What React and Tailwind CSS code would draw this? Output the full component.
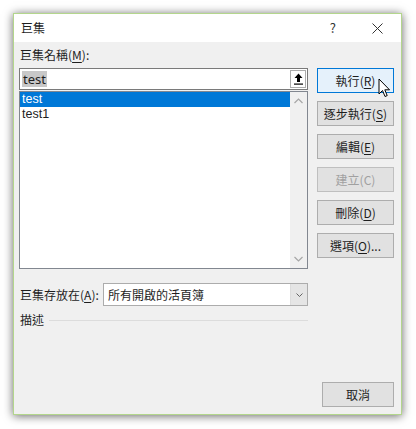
import React from 'react';

const font = { fontFamily: '"Noto Sans CJK TC", "Noto Sans", sans-serif' };
const latin = { fontFamily: '"Noto Sans", "Noto Sans CJK TC", sans-serif' };
const listFont = { fontFamily: '"Liberation Sans", "Noto Sans", sans-serif' };

const Acc = ({ k }) => (
  <>
    (<span className="underline underline-offset-2">{k}</span>)
  </>
);

const Btn = ({ children, active, disabled, className = '' }) => (
  <div
    className={`relative flex h-[25px] items-center justify-center border text-[12px] leading-none ${
      active
        ? 'border-[#0078d7] bg-[#e5f1fb] text-[#1e1e1e]'
        : disabled
        ? 'border-[#bfbfbf] bg-[#e1e1e1] text-[#a0a0a0]'
        : 'border-[#adadad] bg-[#e1e1e1] text-[#1e1e1e]'
    } ${className}`}
  >
    {children}
  </div>
);

const Cursor = () => (
  <svg className="absolute left-[60px] top-[9px]" width="13" height="20" viewBox="0 0 13 20">
    <path d="M1 1 L1 16 L4.5 12.5 L7 18.5 L9.2 17.6 L6.8 11.8 L11.5 11.8 Z" fill="#fff" stroke="#000" strokeWidth="1" strokeLinejoin="round" />
  </svg>
);

const App = () => {
  return (
    <div className="h-[429px] w-[416px] bg-white pl-[13px] pt-[13px]" style={font}>
      <div className="flex h-[402px] w-[389px] flex-col border border-[#b3d68c] shadow-[0_1px_9px_rgba(0,0,0,0.6)]">
        {/* title bar */}
        <div className="flex h-[28px] items-center bg-white pl-[7px] text-[12px] text-[#1e1e1e]">
          <span className="flex-1">巨集</span>
          <span className="mr-[36px] text-[13px] text-[#333]">?</span>
          <svg className="mr-[18px]" width="11" height="11" viewBox="0 0 11 11">
            <path d="M0.5 0.5 L10.5 10.5 M10.5 0.5 L0.5 10.5" stroke="#333" strokeWidth="1" />
          </svg>
        </div>

        {/* body */}
        <div className="flex flex-1 bg-[#f0f0f0] pl-[5px] pr-[7px] text-[12px] text-[#1e1e1e]">
          <div className="flex w-[289px] flex-col">
            <div className="flex h-[26px] items-center pl-[1px]">
              巨集名稱<Acc k="M" />:
            </div>
            <div className="flex h-[22px] border border-[#7a7a7a] bg-white">
              <div className="flex flex-1 items-center pl-[2px]" style={latin}>
                <span className="bg-[#c8c8c8] px-[1px] text-[13px] leading-[16px]">test</span>
              </div>
              <div className="m-[1px] flex w-[16px] items-center justify-center border border-[#adadad] bg-white">
                <svg width="9" height="12" viewBox="0 0 9 12">
                  <path d="M4.5 0.5 L8.5 5 L6 5 L6 9 L3 9 L3 5 L0.5 5 Z" fill="#000" />
                  <rect x="0" y="10.5" width="9" height="1.2" fill="#000" />
                </svg>
              </div>
            </div>
            <div className="mt-[1px] flex h-[178px] border border-[#828790] bg-white">
              <div className="flex flex-1 flex-col text-[12.5px] leading-[15px]" style={listFont}>
                <div className="h-[15px] bg-[#0078d7] pl-[2px] text-white">test</div>
                <div className="h-[14px] pl-[2px] leading-[14px]">test1</div>
              </div>
              <div className="flex w-[17px] flex-col items-center justify-between bg-[#f0f0f0] py-[6px]">
                <svg width="9" height="6" viewBox="0 0 9 6">
                  <path d="M0.5 5 L4.5 1 L8.5 5" fill="none" stroke="#a6a6a6" strokeWidth="1.2" />
                </svg>
                <svg width="9" height="6" viewBox="0 0 9 6">
                  <path d="M0.5 1 L4.5 5 L8.5 1" fill="none" stroke="#a6a6a6" strokeWidth="1.2" />
                </svg>
              </div>
            </div>
            <div className="mt-[14px] flex h-[23px] items-center">
              <span className="w-[84px] pl-[1px]">
                巨集存放在<Acc k="A" />:
              </span>
              <div className="flex h-full flex-1 border border-[#acacac] bg-white">
                <span className="flex flex-1 items-center pl-[4px]">所有開啟的活頁簿</span>
                <div className="flex w-[17px] items-center justify-center border-l border-[#dcdcdc] bg-[#e5e5e5]">
                  <svg width="7" height="4" viewBox="0 0 7 4">
                    <path d="M0.5 0.5 L3.5 3.5 L6.5 0.5" fill="none" stroke="#555" strokeWidth="0.9" />
                  </svg>
                </div>
              </div>
            </div>
            <div className="mt-[6px] flex h-[16px] items-center gap-[5px] pl-[1px]">
              <span>描述</span>
              <div className="h-px flex-1 bg-[#dcdcdc]" />
            </div>
          </div>

          <div className="ml-[9px] flex w-[77px] flex-col gap-[8px] pb-[7px] pt-[26px]">
            <Btn active>
              執行<Acc k="R" />
              <Cursor />
            </Btn>
            <Btn>
              逐步執行<Acc k="S" />
            </Btn>
            <Btn>
              編輯<Acc k="E" />
            </Btn>
            <Btn disabled>建立(C)</Btn>
            <Btn>
              刪除<Acc k="D" />
            </Btn>
            <Btn>
              選項<Acc k="O" />...
            </Btn>
            <Btn className="mt-auto w-[72px] self-end">取消</Btn>
          </div>
        </div>
      </div>
    </div>
  );
};

export default App;
